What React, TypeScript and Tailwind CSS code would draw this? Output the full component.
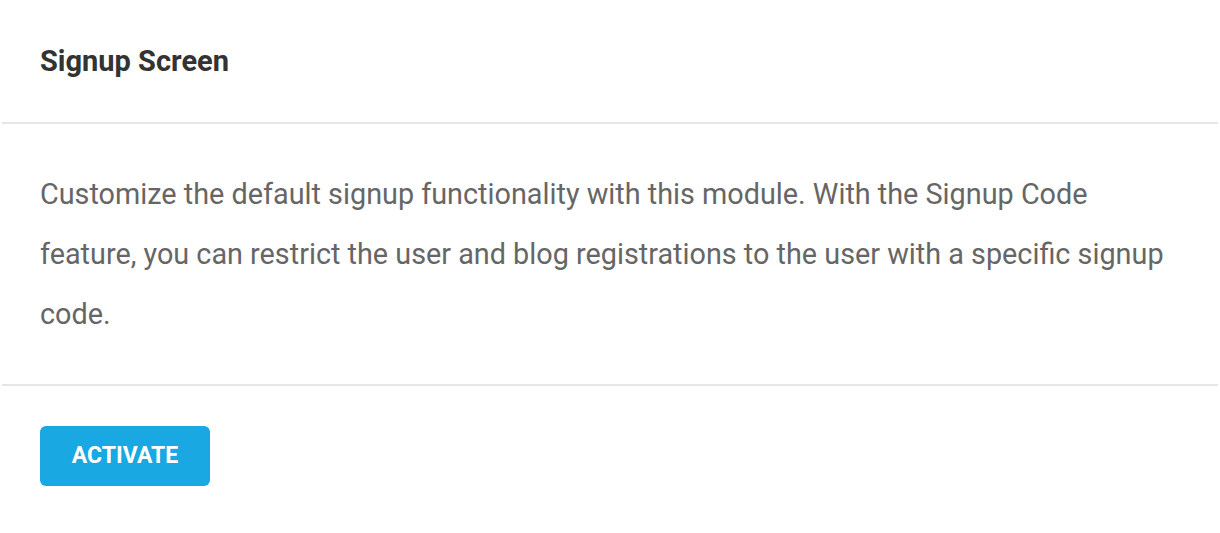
export default function App() {
  return (
    <div className="min-h-[533px] w-full bg-white px-[2px] font-['Roboto',sans-serif]">
      {/* Header */}
      <div className="flex h-[122px] items-center px-[38px]">
        <h2 className="text-[29px] font-bold leading-none text-[#333333]">Signup Screen</h2>
      </div>
      <div className="h-[2px] bg-[#e6e6e6]" />

      {/* Body */}
      <div className="py-[40px] pl-[38px] pr-[40px]">
        <p className="text-[28.8px] leading-[60px] text-[#666666]">
          Customize the default signup functionality with this module. With the Signup Code feature, you can
          restrict the user and blog registrations to the user with a specific signup code.
        </p>
      </div>
      <div className="h-[2px] bg-[#e6e6e6]" />

      {/* Footer */}
      <div className="px-[38px] pt-[40px]">
        <button className="flex h-[60px] w-[170px] items-center justify-center rounded-[6px] bg-[#1aa8e2] text-[23px] font-bold text-white">
          ACTIVATE
        </button>
      </div>
    </div>
  );
}
